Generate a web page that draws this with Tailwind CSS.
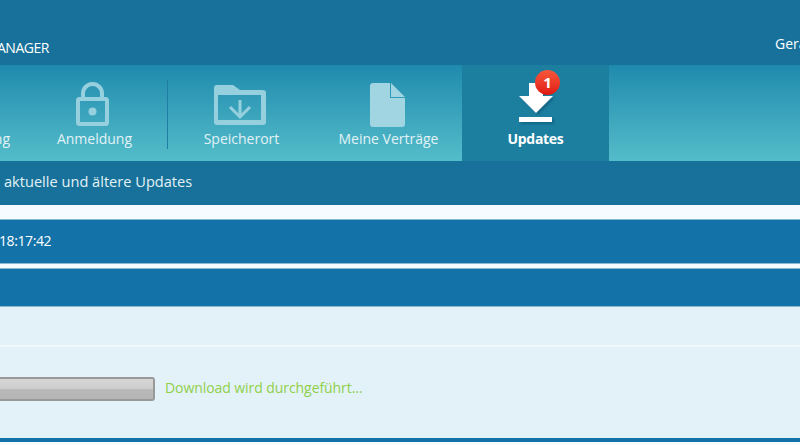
<!DOCTYPE html>
<html lang="de">
<head>
    <title>Updates</title>
    <script src="https://cdn.jsdelivr.net/npm/@tailwindcss/browser@4"></script>
</head>
<body class="w-[800px] h-[445px] overflow-hidden bg-[#f5fbff] font-['Open_Sans','Noto_Sans',sans-serif] text-white">
    <!-- header -->
    <header class="h-[65px] bg-[#17719a] flex items-end justify-between pb-[7px] overflow-hidden">
        <span class="text-[14px] leading-[20px] -ml-[3px] tracking-[-0.5px]">ANAGER</span>
        <span class="text-[14px] leading-[20px] w-[25px] whitespace-nowrap overflow-hidden relative -top-[4px]">Geräte</span>
    </header>

    <!-- tabs -->
    <nav class="h-[96px] flex bg-gradient-to-b from-[#1e8aad] to-[#53bdca] text-[#e2f2f6] text-[14px]">
        <div class="w-[21px] flex items-end justify-end pr-[11px] pb-[12px] leading-[20px]">ng</div>

        <div class="w-[147px] flex flex-col items-center pt-[17px] relative">
            <svg width="34" height="45" viewBox="0 0 34 45" class="text-[#96cfdd] -ml-[3px]">
                <path fill="none" stroke="currentColor" stroke-width="4" d="M7 17V11.500a9.500 9.500 0 0 1 19 0V17"/>
                <rect x="2" y="17" width="29" height="25" rx="1.500" fill="none" stroke="currentColor" stroke-width="4"/>
                <circle cx="16.500" cy="29.500" r="4" fill="currentColor"/>
            </svg>
            <span class="leading-[20px] mt-[2px]">Anmeldung</span>
            <div class="absolute right-0 top-[15px] w-px h-[69px] bg-[#1f7ea3]"></div>
        </div>

        <div class="w-[147px] flex flex-col items-center pt-[20px]">
            <svg width="52" height="40" viewBox="0 0 52 40" class="text-[#96cfdd] -ml-[3px]">
                <path fill="currentColor" fill-rule="evenodd" d="M3 0h16l7 5h23a3 3 0 0 1 3 3v29a3 3 0 0 1-3 3H3a3 3 0 0 1-3-3V3a3 3 0 0 1 3-3zM4 10v25h43V10z"/>
                <path fill="none" stroke="currentColor" stroke-width="3" d="M26 15v17M16 22l10 10 10-10"/>
            </svg>
            <span class="leading-[20px] mt-[4px]">Speicherort</span>
        </div>

        <div class="w-[147px] flex flex-col items-center pt-[18px]">
            <svg width="35" height="44" viewBox="0 0 35 44" class="text-[#a0d5e1] -ml-[2px]">
                <path fill="currentColor" d="M3 0h17v15h15v26a3 3 0 0 1-3 3H3a3 3 0 0 1-3-3V3a3 3 0 0 1 3-3zM21 0l14 14H21z"/>
            </svg>
            <span class="leading-[20px] mt-[2px]">Meine Verträge</span>
        </div>

        <div class="w-[147px] bg-[#1c7fa0] flex flex-col items-center pt-[18px] relative text-white">
            <svg width="34" height="42" viewBox="0 0 34 42" class="drop-shadow-[2px_2px_1px_rgba(10,80,110,0.5)]">
                <path fill="#fff" d="M10 0h14v13h10L17 30 0 13h10zM0 34h33v5H0z"/>
            </svg>
            <span class="leading-[20px] mt-[4px] font-bold tracking-[-0.3px]">Updates</span>
            <div class="absolute left-[73px] top-[5px] w-[25px] h-[25px] rounded-full bg-gradient-to-b from-[#f8553c] to-[#e0140f] flex items-center justify-center text-[15px] font-bold leading-none">1</div>
        </div>
    </nav>

    <!-- sub bar -->
    <div class="h-[44px] bg-[#17719a] flex items-center pl-[4px] pb-[2px] text-[14.600px] text-[#e2f2f6]">aktuelle und ältere Updates</div>
    <div class="h-[14px]"></div>

    <!-- rows -->
    <div class="h-[45px] bg-[#1372a8] border-y border-[#8ab9d2] flex items-center pb-[2px] text-[14px]">
        <span class="-ml-[1px] tracking-[-0.4px]">18:17:42</span>
    </div>
    <div class="h-[4px]"></div>
    <div class="h-[39px] bg-[#1372a8] border-y border-[#8ab9d2]"></div>

    <!-- download panel -->
    <div class="h-[40px] bg-[#e3f2f8] border-b-2 border-[#f0f8fb]"></div>
    <div class="h-[91px] bg-[#e3f2f8] flex items-center gap-[10px] pb-[8px]">
        <div class="w-[155px] h-[24px] rounded-r-[3px] border-2 border-l-0 border-[#999999] bg-[linear-gradient(to_bottom,#d6d6d6_0%,#cdcdcd_50%,#bababa_50%,#b4b4b4_100%)]"></div>
        <span class="text-[14px] tracking-[-0.07px] text-[#8fd04a] relative -top-[1px]">Download wird durchgeführt...</span>
    </div>
    <div class="h-[4px] bg-[#1372a8]"></div>
</body>
</html>
